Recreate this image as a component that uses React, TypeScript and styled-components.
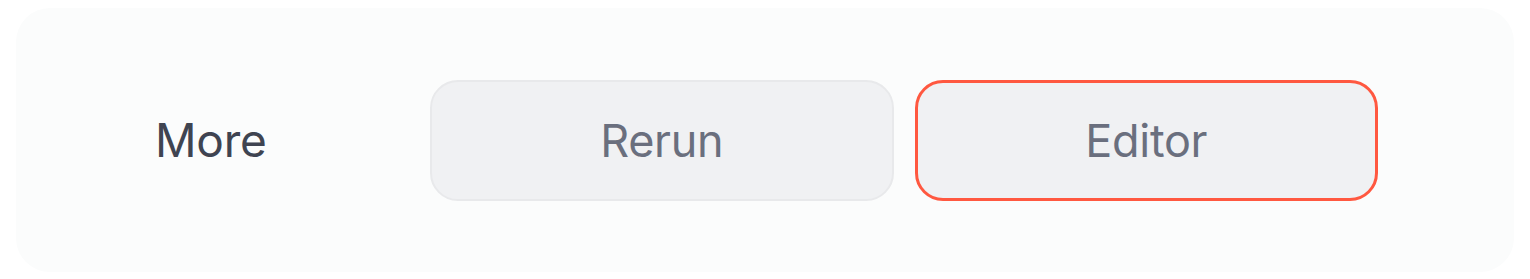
import styled, { createGlobalStyle } from "styled-components";

const GlobalStyle = createGlobalStyle`
    html, body {margin: 0; padding: 0; background: #ffffff;}
    body {font-family: Inter, "Noto Sans", sans-serif; -webkit-font-smoothing: antialiased;}
`;

const Page = styled.div`
    padding: 8px 16px 7px 16px;
`;

const Panel = styled.section`
    display: grid; grid-template-columns: 254px 1fr 1fr; column-gap: 21px; align-items: center;
    height: 264px; box-sizing: border-box; padding: 0 136px 0 139px;
    background-color: #fbfcfc; border-radius: 34px;
`;

const Label = styled.div`
    font-size: 46px; font-weight: 400; color: #3f4451; letter-spacing: -0.2px;
`;

const Btn = styled.button<{ $active?: boolean }>`
    height: 121px; box-sizing: border-box; border-radius: 28px;
    background-color: #f0f1f3; cursor: pointer;
    border: ${p => p.$active ? "3px solid #ff5840" : "2px solid #e8e9eb"};
    font-family: inherit; font-size: 45px; font-weight: 400; color: #6a6f7e; letter-spacing: -0.3px;
    padding: 0;
`;

export default function App() {
    return (
        <>
            <GlobalStyle />
            <Page>
                <Panel>
                    <Label>More</Label>
                    <Btn type="button">Rerun</Btn>
                    <Btn type="button" $active>Editor</Btn>
                </Panel>
            </Page>
        </>
    )
}
